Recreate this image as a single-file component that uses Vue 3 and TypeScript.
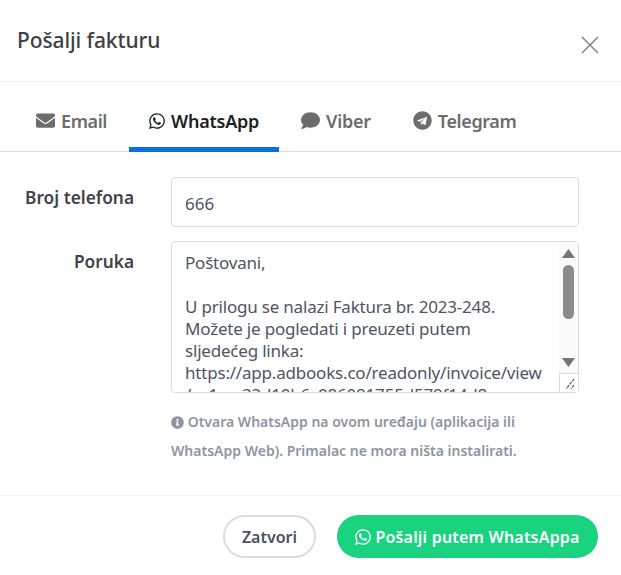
<script setup lang="ts">
import { ref } from 'vue'
const activeTab = ref('whatsapp')
const phone = ref('666')
const message = ref(`Poštovani,

U prilogu se nalazi Faktura br. 2023-248.
Možete je pogledati i preuzeti putem sljedećeg linka:
https://app.adbooks.co/readonly/invoice/view/ce1ccc32d10b6c086081755d579f14d8

Srdačan pozdrav`)
const waPath = 'M380.9 97.1C339 55.1 283.2 32 223.9 32c-122.4 0-222 99.6-222 222 0 39.1 10.2 77.3 29.6 111L0 480l117.7-30.9c32.4 17.7 68.9 27 106.1 27h.1c122.3 0 224.1-99.6 224.1-222 0-59.3-25.2-115-67.1-157zm-157 341.6c-33.2 0-65.7-8.9-94-25.7l-6.7-4-69.8 18.3L72 359.2l-4.4-7c-18.5-29.4-28.2-63.3-28.2-98.2 0-101.7 82.8-184.5 184.6-184.5 49.3 0 95.6 19.2 130.4 54.1 34.8 34.9 56.2 81.2 56.1 130.5 0 101.8-84.9 184.6-186.6 184.6zm101.2-138.2c-5.5-2.8-32.8-16.2-37.9-18-5.1-1.9-8.8-2.8-12.5 2.8-3.7 5.6-14.3 18-17.6 21.8-3.2 3.7-6.5 4.2-12 1.4-32.6-16.3-54-29.1-75.5-66-5.7-9.8 5.7-9.1 16.3-30.3 1.8-3.7.9-6.9-.5-9.7-1.4-2.8-12.5-30.1-17.1-41.2-4.5-10.8-9.1-9.3-12.5-9.5-3.2-.2-6.9-.2-10.6-.2-3.7 0-9.7 1.4-14.8 6.9-5.1 5.6-19.4 19-19.4 46.3 0 27.3 19.9 53.7 22.6 57.4 2.8 3.7 39.1 59.7 94.8 83.8 35.2 15.2 49 16.5 66.6 13.9 10.7-1.6 32.8-13.4 37.4-26.4 4.6-13 4.6-24.1 3.2-26.4-1.3-2.5-5-3.9-10.5-6.6z'
</script>

<template>
  <div class="modal">
    <header class="head">
      <h2 class="title">Pošalji fakturu</h2>
      <button class="close" type="button" aria-label="Zatvori">
        <svg viewBox="0 0 18 18" width="18" height="18"><path d="M1 1l16 16M17 1L1 17" stroke="#7d7d7d" stroke-width="1.4" fill="none"/></svg>
      </button>
    </header>

    <nav class="tabs">
      <a class="tab" :class="{ active: activeTab === 'email' }" @click="activeTab = 'email'">
        <svg class="ico" viewBox="0 0 512 512" width="19" height="19"><path fill="currentColor" d="M502.3 190.8c3.9-3.1 9.7-.2 9.7 4.7V400c0 26.5-21.5 48-48 48H48c-26.5 0-48-21.5-48-48V195.6c0-5 5.7-7.8 9.7-4.7 22.4 17.4 52.1 39.5 154.1 113.6 21.1 15.4 56.7 47.8 92.2 47.6 35.7.3 72-32.8 92.3-47.6 102-74.1 131.6-96.3 154-113.7zM256 320c23.2.4 56.6-29.2 73.4-41.4 132.7-96.3 142.8-104.7 173.4-128.7 5.8-4.5 9.2-11.5 9.2-18.9v-19c0-26.5-21.5-48-48-48H48C21.5 64 0 85.5 0 112v19c0 7.4 3.4 14.3 9.2 18.9 30.6 23.9 40.7 32.4 173.4 128.7 16.8 12.2 50.2 41.8 73.4 41.4z"/></svg>
        Email
      </a>
      <a class="tab" :class="{ active: activeTab === 'whatsapp' }" @click="activeTab = 'whatsapp'">
        <svg class="ico" viewBox="0 0 448 512" width="16" height="18"><path fill="currentColor" :d="waPath"/></svg>
        WhatsApp
      </a>
      <a class="tab" :class="{ active: activeTab === 'viber' }" @click="activeTab = 'viber'">
        <svg class="ico" viewBox="0 0 512 512" width="19" height="19"><path fill="currentColor" d="M256 32C114.6 32 0 125.1 0 240c0 49.6 21.4 95 57 130.7C44.5 421.1 2.7 466 2.2 466.5c-2.2 2.3-2.8 5.7-1.5 8.7S4.8 480 8 480c66.3 0 116-31.8 140.6-51.4 32.7 12.3 69 19.4 107.4 19.4 141.4 0 256-93.1 256-208S397.4 32 256 32z"/></svg>
        Viber
      </a>
      <a class="tab" :class="{ active: activeTab === 'telegram' }" @click="activeTab = 'telegram'">
        <svg class="ico" viewBox="0 0 496 512" width="19" height="19"><path fill="currentColor" d="M248 8C111 8 0 119 0 256s111 248 248 248 248-111 248-248S385 8 248 8zm121.8 169.9l-40.7 191.8c-3 13.6-11.1 16.9-22.4 10.5l-62-45.7-29.9 28.8c-3.3 3.3-6.1 6.1-12.5 6.1l4.4-63.1 114.9-103.8c5-4.4-1.1-6.9-7.7-2.5l-142 89.4-61.2-19.1c-13.3-4.2-13.6-13.3 2.8-19.7l239.1-92.2c11.1-4 20.8 2.7 16.8 19.9z"/></svg>
        Telegram
      </a>
    </nav>

    <form class="body" @submit.prevent>
      <div class="row">
        <label class="label" for="phone">Broj telefona</label>
        <input id="phone" v-model="phone" class="input" type="text" />
      </div>
      <div class="row">
        <label class="label" for="msg">Poruka</label>
        <div class="field">
          <div class="area-wrap">
            <textarea id="msg" v-model="message" class="area"></textarea>
            <div class="scrollbar" aria-hidden="true">
              <svg class="arrow" viewBox="0 0 13 9" width="13" height="9"><path d="M6.5 0L13 9H0z" fill="#757575"/></svg>
              <div class="track"><div class="thumb"></div></div>
              <svg class="arrow" viewBox="0 0 13 9" width="13" height="9"><path d="M0 0h13L6.5 9z" fill="#757575"/></svg>
            </div>
            <div class="grip" aria-hidden="true">
              <svg viewBox="0 0 18 18" width="18" height="18"><path d="M14 5L6 15M14 11l-3 4" stroke="#555" stroke-width="1.2" fill="none" stroke-dasharray="3 1"/></svg>
            </div>
          </div>
          <p class="hint">
            <svg class="info" viewBox="0 0 512 512" width="13" height="13"><path fill="currentColor" d="M256 8C119 8 8 119 8 256s111 248 248 248 248-111 248-248S393 8 256 8zm0 110c23.2 0 42 18.8 42 42s-18.8 42-42 42-42-18.8-42-42 18.8-42 42-42zm56 254c0 6.6-5.4 12-12 12h-88c-6.6 0-12-5.4-12-12v-24c0-6.6 5.4-12 12-12h12v-64h-12c-6.6 0-12-5.4-12-12v-24c0-6.6 5.4-12 12-12h64c6.6 0 12 5.4 12 12v100h12c6.6 0 12 5.4 12 12v24z"/></svg>
            Otvara WhatsApp na ovom uređaju (aplikacija ili WhatsApp Web). Primalac ne mora ništa instalirati.
          </p>
        </div>
      </div>
    </form>

    <footer class="foot">
      <button class="btn ghost" type="button">Zatvori</button>
      <button class="btn wa" type="button">
        <svg viewBox="0 0 448 512" width="16" height="18"><path fill="currentColor" :d="waPath"/></svg>
        Pošalji putem WhatsAppa
      </button>
    </footer>
  </div>
</template>

<style>
html, body { margin: 0; background: #fff; }
</style>

<style scoped>
.modal {
  width: 621px;
  height: 575px;
  background: #fff;
  font-family: "Noto Sans", "Open Sans", sans-serif;
  color: #3e4450;
  box-sizing: border-box;
  overflow: hidden;
}
.head {
  height: 82px;
  box-sizing: border-box;
  border-bottom: 1px solid #f1f2f3;
  display: flex;
  justify-content: space-between;
  padding: 26px 22px 0 17px;
}
.title {
  margin: 0;
  font-size: 21px;
  line-height: 28px;
  font-weight: 500;
  letter-spacing: -0.1px;
  color: #3d4144;
}
.close {
  border: 0;
  background: none;
  padding: 0;
  margin-top: 10px;
  width: 18px;
  height: 18px;
  display: block;
}
.tabs {
  height: 70px;
  box-sizing: border-box;
  display: flex;
  align-items: stretch;
  padding-left: 16px;
  gap: 2px;
  border-bottom: 1px solid #dedede;
}
.tab {
  display: flex;
  align-items: center;
  gap: 6px;
  padding: 12px 20px 0;
  font-size: 18px;
  font-weight: 600;
  letter-spacing: -0.25px;
  color: #6c6c6c;
  margin-bottom: -1px;
  border-bottom: 5px solid transparent;
}
.tab:nth-child(1) { letter-spacing: -0.4px; }
.tab:nth-child(4) { letter-spacing: -0.4px; }
.tab.active {
  color: #1b1f23;
  border-bottom-color: #0b6fde;
}
.body {
  padding: 25px 42px 0 0;
  display: flex;
  flex-direction: column;
  gap: 14px;
}
.row {
  display: flex;
  gap: 37px;
  align-items: flex-start;
}
.label {
  width: 134px;
  text-align: right;
  font-size: 17.3px;
  font-weight: 600;
  line-height: 41px;
  color: #3f4347;
  flex: none;
}
.input {
  flex: 1;
  min-width: 0;
  height: 50px;
  box-sizing: border-box;
  border: 1px solid #d9dbdd;
  border-radius: 4px;
  padding: 3px 13px 0;
  font: 400 17px "Noto Sans", sans-serif;
  color: #4c5663;
  outline: none;
}
.field { flex: 1; min-width: 0; }
.area-wrap {
  position: relative;
  height: 152px;
}
.area {
  display: block;
  width: 100%;
  height: 100%;
  box-sizing: border-box;
  border: 1px solid #d9dbdd;
  border-radius: 4px;
  padding: 10px 34px 0 13px;
  font: 400 17px/22px "Noto Sans", sans-serif;
  letter-spacing: -0.2px;
  color: #4c5663;
  resize: none;
  overflow: hidden;
  outline: none;
}
.scrollbar {
  position: absolute;
  top: 1px;
  right: 1px;
  bottom: 20px;
  width: 19px;
  background: #fafafa;
  display: flex;
  flex-direction: column;
  align-items: center;
  padding: 7px 0 6px;
  box-sizing: border-box;
}
.arrow { flex: none; }
.track { flex: 1; width: 11px; padding-top: 7px; }
.thumb { height: 54px; background: #8b8b8b; border-radius: 6px; }
.grip {
  position: absolute;
  right: 1px;
  bottom: 1px;
  width: 19px;
  height: 19px;
  box-sizing: border-box;
  border-top: 1px solid #dcdcdc;
  border-left: 1px solid #dcdcdc;
  background: #fff;
}
.hint {
  margin: 14px 0 0;
  font-size: 14px;
  font-weight: 600;
  line-height: 29px;
  color: #8d96a0;
  width: 360px;
}
.info { vertical-align: -2px; }
.foot {
  margin-top: 30px;
  border-top: 1px solid #f1f2f3;
  padding: 19px 23px 0;
  display: flex;
  justify-content: flex-end;
  gap: 21px;
}
.btn {
  height: 43px;
  border-radius: 22px;
  font: 600 16px "Noto Sans", sans-serif;
  display: inline-flex;
  align-items: center;
  justify-content: center;
  gap: 4px;
  box-sizing: border-box;
}
.ghost {
  width: 93px;
  background: #fff;
  border: 2px solid #dcdcdc;
  color: #49525e;
}
.wa {
  width: 261px;
  background: #19d37f;
  border: 0;
  color: #fff;
  letter-spacing: 0.2px;
}
</style>
